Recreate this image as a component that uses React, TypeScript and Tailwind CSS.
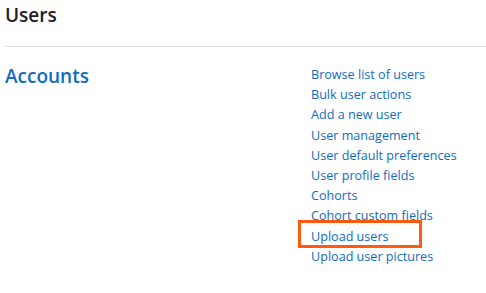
import React from "react";

const links = [
  "Browse list of users",
  "Bulk user actions",
  "Add a new user",
  "User management",
  "User default preferences",
  "User profile fields",
  "Cohorts",
  "Cohort custom fields",
  "Upload users",
  "Upload user pictures",
];

export default function App() {
  return (
    <div className="w-[486px] h-[293px] bg-white overflow-hidden" style={{ fontFamily: '"Open Sans", "Noto Sans", sans-serif' }}>
      <div className="pl-[5px]">
        <h2 className="text-[19px] leading-[30px] font-semibold text-[#1d2125]">Users</h2>
        <div className="mt-[16px] h-px bg-[#dee2e6]" />
        <div className="flex mt-[16px]">
          <div className="w-[306px] shrink-0">
            <h3 className="text-[19px] leading-[26px] font-semibold text-[#0f6cbf]">Accounts</h3>
          </div>
          <ul className="flex flex-col pt-[2px]">
            {links.map((l) => (
              <li key={l} className="relative text-[12.6px] leading-[20.2px] text-[#0f6cbf]">
                {l}
                {l === "Upload users" && (
                  <span className="absolute left-[-13px] top-[-7px] w-[124px] h-[28px] border-[3px] border-[#ff5a0f]" />
                )}
              </li>
            ))}
          </ul>
        </div>
      </div>
    </div>
  );
}
